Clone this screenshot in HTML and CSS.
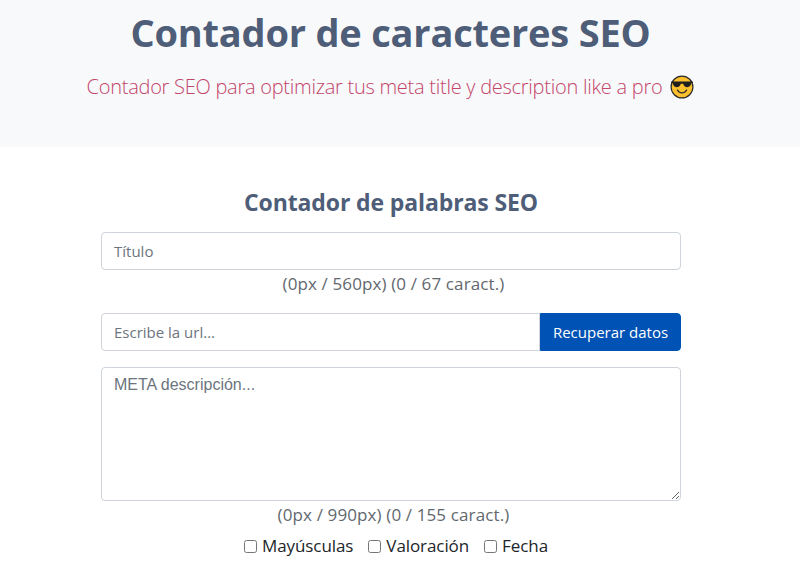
FILE: index.html
```html
<!DOCTYPE html>
<html lang="es">
<head>
    <meta charset="UTF-8">
    <meta name="viewport" content="width=device-width, initial-scale=1.0">
    <title>Contador de caracteres SEO</title>
    <link rel="stylesheet" href="styles.css">
</head>
<body>
    <header class="hero">
        <h1>Contador de caracteres SEO</h1>
        <p class="lead">
            <span class="lead-text">Contador SEO para optimizar tus meta title y description like a pro</span>
            <svg class="emoji" viewBox="0 0 24 24" width="24" height="24" aria-hidden="true">
                <circle cx="12" cy="12" r="10.9" fill="#fbc02d" stroke="#2b2b2b" stroke-width="1.2"/>
                <path d="M1.2 6.6h21.6v1.5h-1.6c-.3 2.8-1.6 4.1-3.8 4.1-2.4 0-3.6-1.3-4.2-3.5h-2.4c-.6 2.2-1.8 3.5-4.2 3.5-2.2 0-3.5-1.3-3.8-4.1H1.2z" fill="#1f1f1f"/>
                <path d="M7.4 15c1.1 1.9 2.7 2.9 4.6 2.9s3.5-1 4.6-2.9" fill="none" stroke="#2b2b2b" stroke-width="1.3" stroke-linecap="round"/>
            </svg>
        </p>
    </header>

    <main class="tool">
        <h2>Contador de palabras SEO</h2>
        <form class="seo-form">
            <input type="text" class="field" placeholder="Título">
            <div class="count">(0px / 560px) (0 / 67 caract.)</div>
            <div class="url-group">
                <input type="text" class="field" placeholder="Escribe la url...">
                <button type="button" class="fetch-btn">Recuperar datos</button>
            </div>
            <textarea class="field meta" placeholder="META descripción..."></textarea>
            <div class="count">(0px / 990px) (0 / 155 caract.)</div>
            <div class="options">
                <label><input type="checkbox"> Mayúsculas</label>
                <label><input type="checkbox"> Valoración</label>
                <label><input type="checkbox"> Fecha</label>
            </div>
        </form>
    </main>
</body>
</html>
```

FILE: styles.css
```css
* { box-sizing: border-box; }
body { margin: 0; font-family: "Open Sans", "Noto Sans", sans-serif; font-size: 17px; line-height: 24px; color: #212529; overflow: hidden; }

/* the original page had a scrollbar gutter, so content centres left of the middle */
.hero { height: 147px; background-color: #f8f9fa; text-align: center; padding: 8px 19px 0 0; }
.hero h1 { margin: 0; font-size: 38px; line-height: 48px; font-weight: 700; letter-spacing: -0.2px; color: #4e5d78; }
.lead { margin: 16px 0 0; display: flex; justify-content: center; align-items: center; gap: 8px; font-size: 20px; line-height: 30px; font-weight: 300; letter-spacing: -0.26px; }
.lead-text { color: #c2456a; }
.emoji { display: block; }

.tool { width: 580px; margin-left: 101px; padding-top: 40px; }
.tool h2 { margin: 0 0 15px; text-align: center; font-size: 23px; line-height: 30px; font-weight: 700; letter-spacing: -0.12px; color: #4e5d78; }

.field { display: block; width: 100%; height: 38px; padding: 6px 12px; font-family: inherit; font-size: 15px; color: #495057; background: #fff; border: 1px solid #ced4da; border-radius: 4px; outline: none; }
.field::placeholder { color: #6c757d; opacity: 1; }

.count { margin-top: 2px; padding-left: 5px; text-align: center; letter-spacing: 0.12px; color: #62686e; }
.url-group { display: flex; margin-top: 17px; }
.url-group .field { flex: 1; border-radius: 4px 0 0 4px; }
.fetch-btn { width: 141px; height: 38px; flex: none; font-family: inherit; font-size: 15px; color: #fff; background-color: #0052b4; border: 1px solid #0052b4; border-radius: 0 4px 4px 0; }

.meta { height: 134px; margin-top: 16px; padding-top: 8px; font-family: "Liberation Sans", Arial, sans-serif; font-size: 16px; resize: vertical; }

.options { display: flex; justify-content: center; gap: 15px; margin-top: 7px; padding-left: 10px; letter-spacing: -0.08px; color: #212529; }
.options label { display: flex; align-items: center; gap: 5px; }
.options input { width: 13px; height: 13px; margin: 0; }
```
